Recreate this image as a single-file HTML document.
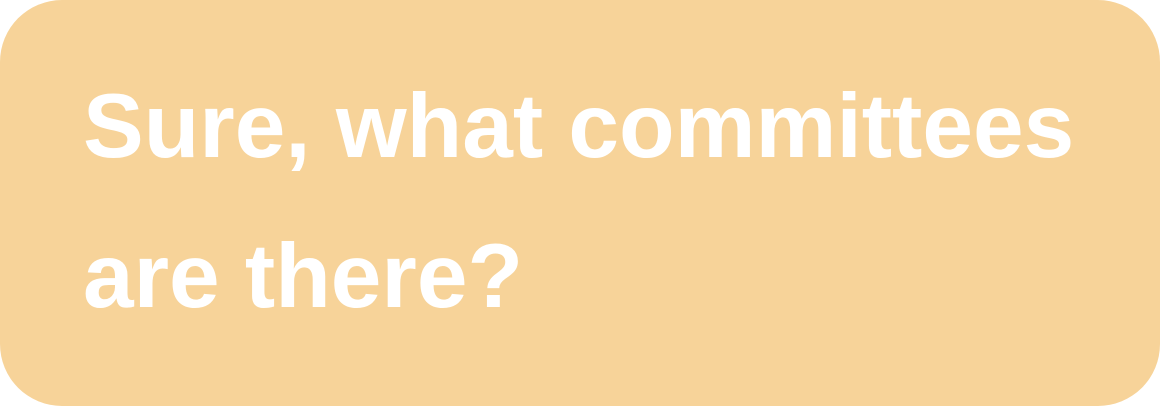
<!DOCTYPE html>
<html>
<head>
<meta charset="utf-8">
<style>
html,body{margin:0;padding:0;background:#fff;}
body{width:1160px;height:406px;overflow:hidden;}
.box{position:absolute;left:0;top:0;width:1160px;height:406px;background:#F7D399;border-radius:62px;}
.t{position:absolute;left:83px;font-family:"Liberation Sans",sans-serif;font-weight:bold;font-size:91px;color:#fff;white-space:nowrap;line-height:1;}
</style>
</head>
<body>
<div class="box">
<div class="t" style="top:81px;">Sure, what committees</div>
<div class="t" style="top:231px;">are there?</div>
</div>
</body>
</html>
